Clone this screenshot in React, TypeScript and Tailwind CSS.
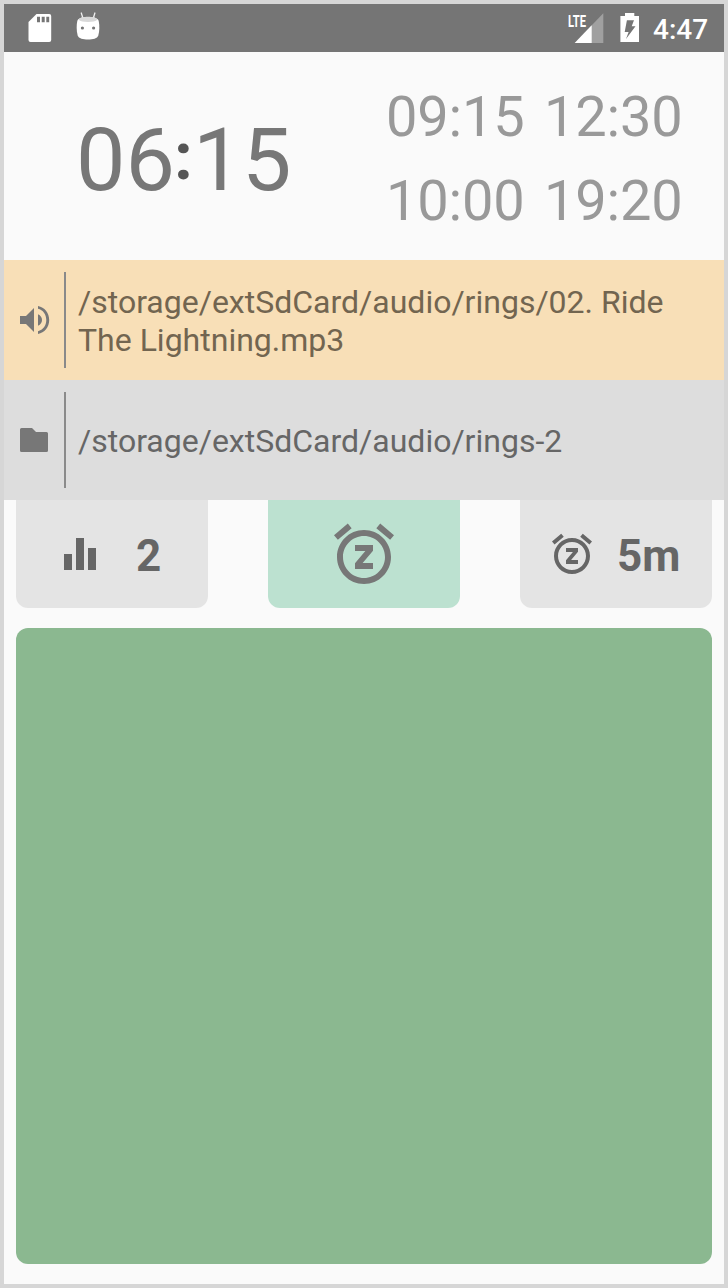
import React from 'react';

function SnoozeIcon({ className }: { className: string }) {
  return (
    <svg viewBox="0 0 24 24" className={className} fill="currentColor">
      <path d="M7.88 3.39L6.6 1.86 2 5.71l1.29 1.53 4.59-3.85zM22 5.72l-4.6-3.86-1.29 1.53 4.6 3.86L22 5.72zM12 4c-4.97 0-9 4.03-9 9s4.02 9 9 9 9-4.03 9-9-4.03-9-9-9zm0 16c-3.87 0-7-3.13-7-7s3.13-7 7-7 7 3.13 7 7-3.13 7-7 7z" />
      <path d="M9 9H15V10.900L11.550 15H15V17H9V15.100L12.450 11H9Z" />
    </svg>
  );
}

function StatusBar() {
  return (
    <header className="flex h-12 shrink-0 items-center bg-[#757575] text-white">
      <svg viewBox="0 0 24 28" className="ml-6 h-7 w-6" fill="white">
        <path
          fillRule="evenodd"
          d="M8.5 0H21.2Q23.2 0 23.2 2V26Q23.2 28 21.2 28H2.5Q.5 28 .5 26V8ZM9 2.8V8.3H12V2.8ZM13.7 2.8V8.3H16.7V2.8ZM18.3 2.8V8.3H21.2V2.8Z"
        />
      </svg>
      <svg viewBox="0 0 24 32" className="ml-6 h-8 w-6">
        <path d="M5.300 1L7 6.500M18.900 1L17.200 6.500" stroke="#f0f0f0" strokeWidth="1.300" strokeLinecap="round" />
        <path d="M1.300 9C2 6.500 5 5 12 5S22 6.500 22.700 9C23.600 13 23.600 19 22.300 23.500C21.300 26.500 17 27.500 12 27.500S2.700 26.500 1.700 23.500C.4 19 .4 13 1.300 9Z" fill="white" />
        <path d="M2.500 7.500C4 5.500 8 4.800 12 4.800S20 5.500 21.500 7.500C20 9.300 16 10 12 10S4 9.300 2.500 7.500Z" fill="#d8d8d8" />
        <circle cx="6.400" cy="16" r="1.600" fill="#757575" />
        <circle cx="17.600" cy="16" r="1.600" fill="#757575" />
      </svg>
      <svg viewBox="0 0 38 32" className="ml-[468px] h-8 w-[38px]">
        <path d="M35.300 1.300V31H6.700Z" fill="#a0a0a0" />
        <path d="M23.700 13.300V31H6.700Z" fill="white" />
        <text x="0" y="14.600" fontFamily="Roboto, sans-serif" fontWeight="700" fontSize="17.300" textLength="18" lengthAdjust="spacingAndGlyphs" fill="white">LTE</text>
      </svg>
      <svg viewBox="0 0 20 32" className="ml-3.5 h-8 w-5" fill="white">
        <path
          fillRule="evenodd"
          d="M5 1H14.300V4H19V30H.4V4H5ZM6.900 8.300L4.700 20H8.600L6 27L15.500 14.300H11.700L14 8.300Z"
        />
      </svg>
      <span className="mt-1 ml-[13px] text-[28px] leading-8 font-medium">4:47</span>
    </header>
  );
}

function Clock() {
  return (
    <section className="flex h-52 shrink-0 text-[#999]">
      <div className="flex w-[382px] shrink-0 pt-[56px] pl-[72px] text-[88px] leading-[104px] text-[#777]">
        <span className="w-[98px]">06</span>
        <span className="w-[19px] text-[67px] leading-[97px] font-bold text-[#555]">:</span>
        <span className="tracking-[-0.5px]">15</span>
      </div>
      <div className="grid grid-cols-[158px_auto] grid-rows-[84px_84px] content-start pt-[23px] text-[56px] leading-[84px] tracking-[-0.2px]">
        <span>09:15</span>
        <span>12:30</span>
        <span>10:00</span>
        <span>19:20</span>
      </div>
    </section>
  );
}

function PathRow({ className, icon, children }: { className: string; icon: React.ReactNode; children: React.ReactNode }) {
  return (
    <div className={`flex h-[120px] shrink-0 items-center ${className}`}>
      <div className="flex w-[60px] shrink-0 pl-4 text-[#777]">{icon}</div>
      <div className="h-24 w-0.5 shrink-0 bg-[#8a8a8a]" />
      <p className="pt-0.5 pl-3 text-[32px] leading-[38px]">{children}</p>
    </div>
  );
}

export default function App() {
  return (
    <div className="flex h-[1288px] w-[728px] flex-col border-4 border-[#d6d6d6] bg-[#fafafa] font-['Roboto',sans-serif]">
      <StatusBar />
      <Clock />
      <PathRow
        className="bg-[#f8dfb7] text-[#726550]"
        icon={
          <svg viewBox="0 0 30 28" className="h-7 w-[30px]" fill="currentColor">
            <path d="M0 10H6L14 2V26L6 18H0ZM18 8.200Q22 10.200 22 14T18 19.800Z" />
            <path d="M18 0C24.500 1.200 29.200 7 29.200 14S24.500 26.800 18 28V25.200C23 24 26.300 19.500 26.300 14S23 4 18 2.800Z" />
          </svg>
        }
      >
        /storage/extSdCard/audio/rings/02. Ride
        <br />
        The Lightning.mp3
      </PathRow>
      <PathRow
        className="bg-[#ddd] text-[#666]"
        icon={
          <svg viewBox="0 0 28 24" className="h-6 w-7" fill="currentColor">
            <path d="M1.500 0H12L16 4H26.500Q28 4 28 5.500V22.500Q28 24 26.500 24H1.500Q0 24 0 22.500V1.500Q0 0 1.500 0Z" />
          </svg>
        }
      >
        /storage/extSdCard/audio/rings-2
      </PathRow>
      <div className="flex h-[108px] shrink-0 justify-between px-3 text-[44px] leading-[52px] font-bold text-[#666]">
        <button className="flex w-48 items-start rounded-b-xl bg-[#e4e4e4] pl-12">
          <svg viewBox="0 0 32 32" className="mt-[38px] h-8 w-8" fill="currentColor">
            <path d="M0 16H8V32H0ZM12 0H20V32H12ZM24 10H32V32H24Z" />
          </svg>
          <span className="mt-[30px] ml-10">2</span>
        </button>
        <button className="flex w-48 items-start justify-center rounded-b-xl bg-[#bce1d0]">
          <SnoozeIcon className="mt-[18px] size-[72px] text-[#777]" />
        </button>
        <button className="flex w-48 items-start rounded-b-xl bg-[#e4e4e4] pl-7">
          <SnoozeIcon className="mt-[30px] size-12" />
          <span className="mt-[30px] ml-[21px]">5m</span>
        </button>
      </div>
      <main className="mx-3 mt-5 mb-5 flex-1 rounded-xl bg-[#8bb890]" />
    </div>
  );
}
